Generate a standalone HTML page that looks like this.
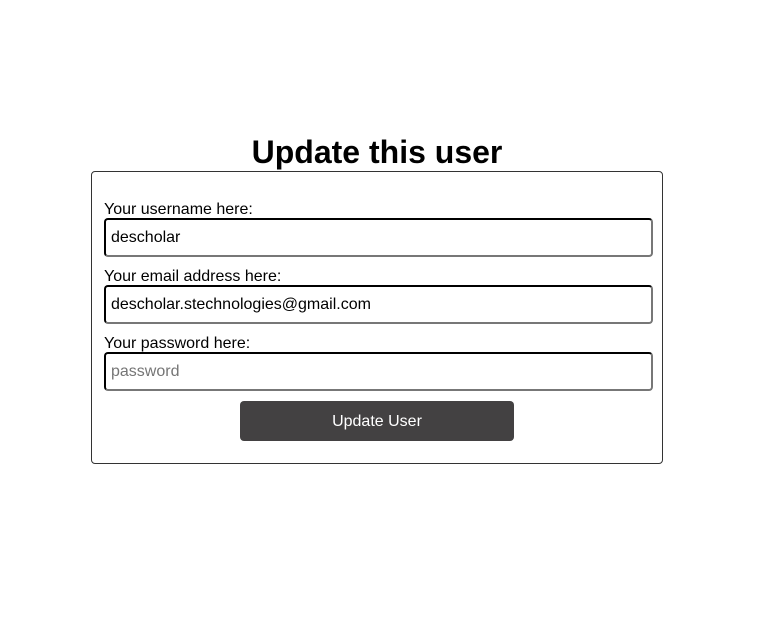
<!DOCTYPE html>
<html><head><style>
body{margin:0;width:768px;height:644px;background:#fff;font-family:"Liberation Sans",sans-serif;position:relative}
h1{position:absolute;left:0;width:754px;top:134px;margin:0;text-align:center;font-size:32px;line-height:37px;font-weight:bold;color:#000}
.box{position:absolute;left:91px;top:171px;width:570px;height:291px;border:1px solid #333;border-radius:4px}
.lbl{position:absolute;left:104px;font-size:16px;line-height:18px;color:#000}
.inp{position:absolute;left:104px;height:35px;border:2px inset #767676;border-color:#111 #777 #777 #111;border-radius:4px;font-size:16px;line-height:36px;padding-left:5px;box-sizing:content-box;width:540px}
.btn{position:absolute;left:240px;top:401px;width:274px;height:40px;background:#434142;border-radius:4px;color:#fff;font-size:16px;line-height:41px;text-align:center}
</style></head><body>
<h1>Update this user</h1>
<div class="box"></div>
<div class="lbl" style="top:201px">Your username here:</div>
<div class="inp" style="top:218px">descholar</div>
<div class="lbl" style="top:268px">Your email address here:</div>
<div class="inp" style="top:285px">descholar.stechnologies@gmail.com</div>
<div class="lbl" style="top:335px">Your password here:</div>
<div class="inp" style="top:352px;color:#757575">password</div>
<div class="btn">Update User</div>
</body></html>
